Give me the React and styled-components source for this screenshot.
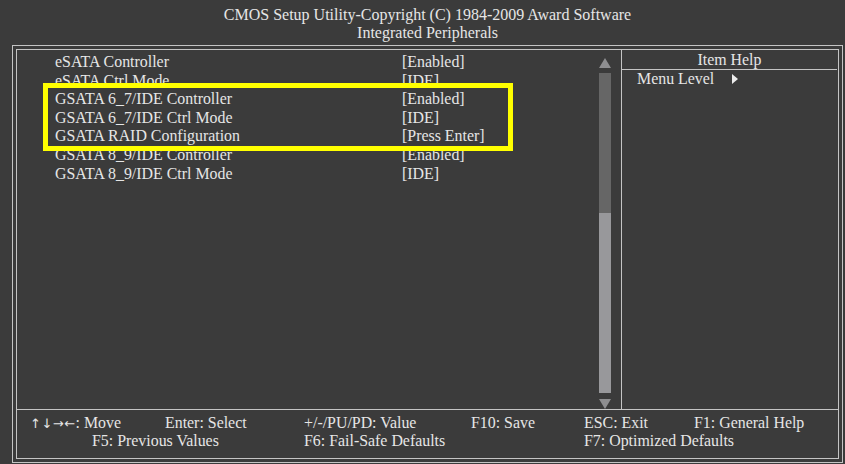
import React from "react";
import styled, { createGlobalStyle } from "styled-components";

const GlobalStyle = createGlobalStyle`
  html, body {
    margin: 0;
    padding: 0;
    background: #3b3b3b;
  }
  body {
    font-family: "Liberation Serif", "Times New Roman", serif;
    color: #e6e6e6;
  }
`;

const Screen = styled.div`
  width: 845px;
  height: 464px;
  display: flex;
  flex-direction: column;
  background: #3b3b3b;
  overflow: hidden;
`;

const Header = styled.div`
  height: 45px;
  box-sizing: border-box;
  padding: 6px 0 0 12px;
  width: 843px;
  text-align: center;
  font-size: 16px;
  line-height: 17.5px;
`;

const OuterFrame = styled.div`
  margin-left: 12px;
  width: 831px;
  height: 418px;
  box-sizing: border-box;
  border: 1px solid #c4c4c4;
  padding: 3px;
`;

const InnerFrame = styled.div`
  height: 100%;
  box-sizing: border-box;
  border: 1px solid #c4c4c4;
  display: flex;
  flex-direction: column;
`;

const Main = styled.div`
  flex: 1;
  display: flex;
  min-height: 0;
`;

const ListPanel = styled.div`
  flex: 1;
  display: flex;
  position: relative;
`;

const List = styled.div`
  flex: 1;
  padding-top: 3px;
`;

const Row = styled.div`
  display: grid;
  grid-template-columns: 347px 1fr;
  padding-left: 38px;
  font-size: 15.9px;
  line-height: 18.6px;
  white-space: nowrap;
`;

const Highlight = styled.div`
  position: absolute;
  left: 26px;
  top: 33px;
  width: 470px;
  height: 68px;
  box-sizing: border-box;
  border: 5px solid #ffff00;
  pointer-events: none;
`;

const ScrollBar = styled.div`
  width: 12px;
  margin: 8px 10px 0 0;
  display: flex;
  flex-direction: column;
  align-items: center;
`;

const Arrow = styled.div`
  width: 0;
  height: 0;
  border-left: 6px solid transparent;
  border-right: 6px solid transparent;
  ${(p) =>
    p.$down
      ? "border-top: 10px solid #8e8e90; margin-top: 6px;"
      : "border-bottom: 10px solid #8e8e90; margin-bottom: 5px;"}
`;

const Track = styled.div`
  width: 12px;
  height: 320px;
  background: #666666;
  display: flex;
  flex-direction: column;
  justify-content: flex-end;
`;

const Thumb = styled.div`
  height: 180px;
  background: #98989b;
`;

const HelpPanel = styled.div`
  width: 216px;
  border-left: 1px solid #c4c4c4;
  display: flex;
  flex-direction: column;
`;

const HelpTitle = styled.div`
  height: 19px;
  margin-right: 1px;
  border-bottom: 1px solid #c4c4c4;
  text-align: center;
  font-size: 15.9px;
  line-height: 19px;
`;

const HelpLine = styled.div`
  display: flex;
  align-items: center;
  padding-left: 15px;
  font-size: 15.9px;
  line-height: 18px;
`;

const RightTriangle = styled.span`
  display: inline-block;
  margin-left: 18px;
  width: 0;
  height: 0;
  border-top: 5px solid transparent;
  border-bottom: 5px solid transparent;
  border-left: 6px solid #ececec;
`;

const Footer = styled.div`
  height: 44px;
  border-top: 1px solid #c4c4c4;
  padding: 4px 0 0 13px;
  display: grid;
  grid-template-columns: 135px 139px 167px 113px 110px 1fr;
  grid-auto-rows: 18px;
  font-size: 15.9px;
  line-height: 18px;
  white-space: nowrap;
`;

const Key = styled.div`
  grid-column: ${(p) => p.$col} / span ${(p) => p.$span || 1};
  padding-left: ${(p) => p.$indent || 0}px;
`;

const Arrows = styled.span`
  font-family: "DejaVu Sans", sans-serif;
  font-size: 13px;
  letter-spacing: 0.5px;
`;

const rows = [
  ["eSATA Controller", "[Enabled]"],
  ["eSATA Ctrl Mode", "[IDE]"],
  ["GSATA 6_7/IDE Controller", "[Enabled]"],
  ["GSATA 6_7/IDE Ctrl Mode", "[IDE]"],
  ["GSATA RAID Configuration", "[Press Enter]"],
  ["GSATA 8_9/IDE Controller", "[Enabled]"],
  ["GSATA 8_9/IDE Ctrl Mode", "[IDE]"],
];

export default function App() {
  return (
    <Screen>
      <GlobalStyle />
      <Header>
        <div>CMOS Setup Utility-Copyright (C) 1984-2009 Award Software</div>
        <div>Integrated Peripherals</div>
      </Header>
      <OuterFrame>
        <InnerFrame>
          <Main>
            <ListPanel>
              <List>
                {rows.map(([label, value]) => (
                  <Row key={label}>
                    <span>{label}</span>
                    <span>{value}</span>
                  </Row>
                ))}
              </List>
              <Highlight />
              <ScrollBar>
                <Arrow />
                <Track>
                  <Thumb />
                </Track>
                <Arrow $down />
              </ScrollBar>
            </ListPanel>
            <HelpPanel>
              <HelpTitle>Item Help</HelpTitle>
              <HelpLine>
                Menu Level
                <RightTriangle />
              </HelpLine>
            </HelpPanel>
          </Main>
          <Footer>
            <Key $col={1}>
              <Arrows>↑↓→←</Arrows>: Move
            </Key>
            <Key $col={2}>Enter: Select</Key>
            <Key $col={3}>+/-/PU/PD: Value</Key>
            <Key $col={4}>F10: Save</Key>
            <Key $col={5}>ESC: Exit</Key>
            <Key $col={6}>F1: General Help</Key>
            <Key $col={1} $span={2} $indent={62}>
              F5: Previous Values
            </Key>
            <Key $col={3} $span={2}>
              F6: Fail-Safe Defaults
            </Key>
            <Key $col={5} $span={2}>
              F7: Optimized Defaults
            </Key>
          </Footer>
        </InnerFrame>
      </OuterFrame>
    </Screen>
  );
}
